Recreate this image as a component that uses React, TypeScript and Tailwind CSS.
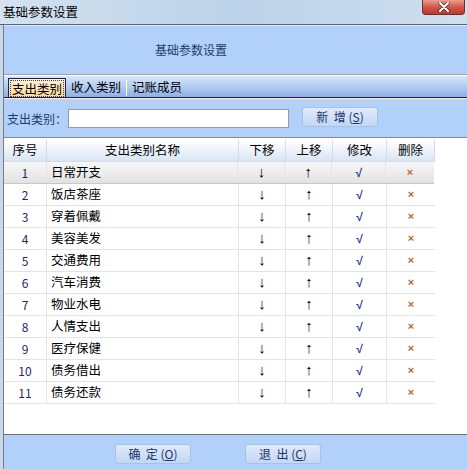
import React from "react";

const rows = [
  "日常开支",
  "饭店茶座",
  "穿着佩戴",
  "美容美发",
  "交通费用",
  "汽车消费",
  "物业水电",
  "人情支出",
  "医疗保健",
  "债务借出",
  "债务还款",
];

const cols = ["w-[43px]", "w-[192px]", "w-[47px]", "w-[47px]", "w-[54px]", "w-[48px]"];

const glyph = { fontFamily: '"Liberation Sans", "DejaVu Sans", sans-serif' };

const Btn = ({ label, hot }: { label: string; hot: string }) => (
  <button className="h-[20px] w-[76px] rounded-[3px] border border-[#a9c2e2] bg-gradient-to-b from-[#dfeafb] to-[#c2d7f4] text-[12px] leading-none text-[#1c3568] flex items-center justify-center whitespace-pre">
    {label} (<span className="underline">{hot}</span>)
  </button>
);

const App = () => {
  return (
    <div
      className="w-[467px] h-[469px] overflow-hidden flex flex-col bg-[#c6d8ec] text-[12px] text-black"
      style={{ fontFamily: '"Noto Sans CJK SC", "Noto Sans", sans-serif' }}
    >
      {/* title bar */}
      <div className="relative h-[24px] shrink-0 bg-gradient-to-r from-[#d4e2f0] via-[#bcd2e8] to-[#cfdff0] flex items-center pl-[3px]">
        <span className="text-[12.5px] text-black">基础参数设置</span>
        <div className="absolute right-[2px] top-0 w-[43px] h-[15px] rounded-b-[4px] border border-t-0 border-[#7a2a22] bg-gradient-to-b from-[#e8a090] via-[#d0584a] to-[#b83a2c] flex items-center justify-center">
          <svg width="12" height="10" viewBox="0 0 12 10">
            <path d="M2 1 L10 9 M10 1 L2 9" stroke="#3a2a2a" strokeWidth="3.4" strokeLinecap="round" />
            <path d="M2 1 L10 9 M10 1 L2 9" stroke="#ffffff" strokeWidth="2" strokeLinecap="round" />
          </svg>
        </div>
      </div>
      <div className="h-px shrink-0 bg-[#56667c]" />

      <div className="flex flex-1 min-h-0">
        <div className="w-[3px] shrink-0 bg-[#c6d8ec]" />
        <div className="w-px shrink-0 bg-[#7d7d7d]" />
        <div className="flex-1 flex flex-col min-w-0">
          <div className="h-px bg-[#e2ebf5]" />
          {/* header panel */}
          <div className="h-[48px] bg-[#b1d1fb] flex items-center pl-[151px] text-[#1c3a6c]">
            基础参数设置
          </div>
          <div className="h-px bg-[#a2a2a2]" />
          <div className="h-px bg-white" />
          {/* tabs */}
          <div className="h-[21px] bg-gradient-to-b from-[#d8e7fa] to-[#8fb0e4] flex items-end pl-[4px]">
            <div className="h-[19px] w-[58px] border border-b-0 border-[#0a246a] bg-gradient-to-b from-[#fff0d2] to-[#fbd79a] flex items-center justify-center">
              <span className="px-[1px] leading-[15px] outline outline-1 outline-dotted outline-[#444] text-[12.5px]">支出类别</span>
            </div>
            <div className="h-[19px] flex items-center pl-[5px] pr-[5px] text-[12.5px]">收入类别</div>
            <div className="w-px h-[16px] mb-[1px] bg-[#6f86b0] border-r border-white" />
            <div className="h-[19px] flex items-center pl-[5px] text-[12.5px]">记账成员</div>
          </div>
          <div className="h-px bg-[#0a246a]" />
          <div className="h-px bg-[#dfeafa]" />
          <div className="h-px bg-[#fcc98f]" />
          {/* search */}
          <div className="h-[37px] bg-[#b1d1fb] flex items-center pl-[3px] text-[#1c3a6c]">
            <span className="text-[12px]">支出类别：</span>
            <div className="ml-[1px] w-[221px] h-[19px] bg-white border border-[#9a9a9a]" />
            <div className="ml-[13px] mb-[3px]">
              <Btn label="新  增" hot="S" />
            </div>
          </div>
          <div className="h-px bg-[#8a8a8a]" />
          {/* table */}
          <div className="flex-1 bg-white pt-[2px] min-h-0">
            <div className="flex w-[431px] h-[22px] bg-gradient-to-b from-[#ffffff] to-[#d9e5f4] border-b border-[#d4dbe6]">
              {["序号", "支出类别名称", "下移", "上移", "修改", "删除"].map((h, i) => (
                <div
                  key={h}
                  className={`${cols[i]} flex items-center justify-center border-r border-[#d6dde8] text-[12.5px]`}
                >
                  {h}
                </div>
              ))}
            </div>
            {rows.map((name, i) => (
              <div
                key={name}
                className={`flex h-[22px] border-b ${
                  i === 0
                    ? "bg-gradient-to-b from-[#f7f7f7] to-[#e2e2e2] border-[#c8c8c8] w-[430px]"
                    : "border-[#e4e4e4] w-[431px]"
                }`}
              >
                <div className={`${cols[0]} flex items-center justify-center border-r border-[#e4e4e4] text-[#1a2a66]`}>
                  {i + 1}
                </div>
                <div className={`${cols[1]} flex items-center pl-[4px] border-r border-[#e4e4e4] text-[12.5px]`}>
                  {name}
                </div>
                <div style={glyph} className={`${cols[2]} flex items-center justify-center border-r border-[#e4e4e4] text-[15px] font-bold text-black`}>
                  ↓
                </div>
                <div style={glyph} className={`${cols[3]} flex items-center justify-center border-r border-[#e4e4e4] text-[15px] font-bold text-black`}>
                  ↑
                </div>
                <div style={glyph} className={`${cols[4]} flex items-center justify-center border-r border-[#e4e4e4] text-[12px] font-bold text-[#24379a]`}>
                  √
                </div>
                <div style={glyph} className={`${cols[5]} flex items-center justify-center text-[11px] font-bold text-[#b86a2c]`}>
                  ×
                </div>
              </div>
            ))}
          </div>
          <div className="h-px bg-[#6f6f6f]" />
          {/* bottom */}
          <div className="h-[34px] bg-[#b1d1fb] flex items-center pl-[111px] gap-[54px] pt-[3px]">
            <Btn label="确  定" hot="O" />
            <Btn label="退  出" hot="C" />
          </div>
        </div>
      </div>
    </div>
  );
};

export default App;
